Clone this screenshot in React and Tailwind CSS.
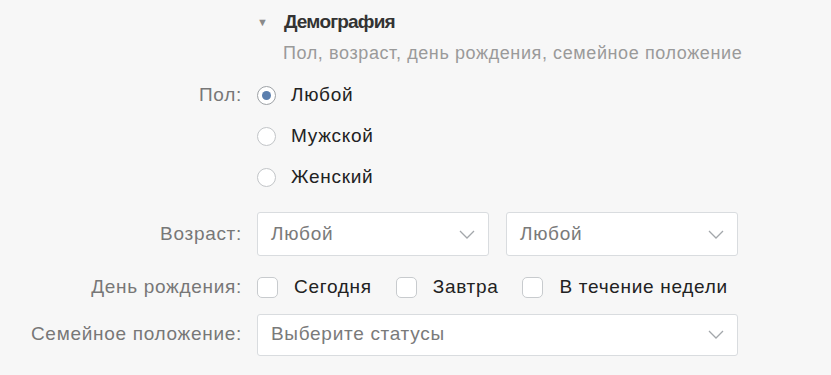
const font = { fontFamily: '"Liberation Sans", Arial, sans-serif' };

const Chevron = () => (
  <svg width="16" height="9" viewBox="0 0 16 9" fill="none">
    <polyline points="1,1 8,8 15,1" stroke="#a3a7ab" strokeWidth="1.3" />
  </svg>
);

const Select = ({ value, className }) => (
  <div className={`flex items-center justify-between rounded-[3px] border border-[#d9dcdf] bg-white pl-[13px] pr-[13px] ${className}`}>
    <span className="text-[19px] tracking-[0.7px] text-[#7a7a7a]">{value}</span>
    <Chevron />
  </div>
);

const Radio = ({ checked, label }) => (
  <label className="flex h-[41px] items-center gap-[15px]">
    <span className={`flex h-[19px] w-[19px] items-center justify-center rounded-full border bg-white ${checked ? "border-[#9ea2a6]" : "border-[#c2c5c8]"}`}>
      {checked && <span className="h-[9px] w-[9px] rounded-full bg-[#5b7fae]" />}
    </span>
    <span className="text-[19px] tracking-[0.7px] text-[#222]">{label}</span>
  </label>
);

const Check = ({ label }) => (
  <label className="flex items-center gap-[16px]">
    <span className="h-[21px] w-[21px] rounded-[5px] border border-[#c8cbce] bg-white" />
    <span className="text-[19px] tracking-[0.7px] text-[#222]">{label}</span>
  </label>
);

export default function App() {
  return (
    <div style={font} className="h-[375px] w-[831px] bg-[#f7f7f7] pt-[10px]">
      <div className="ml-[257px]">
        <div className="flex h-[24px] items-center gap-[16px]">
          <span className="text-[11px] text-[#8a8a8a]">▼</span>
          <span className="text-[19px] font-bold tracking-[-0.8px] text-[#333]">Демография</span>
        </div>
        <div className="ml-[26px] mt-[8px] text-[18px] leading-[22px] tracking-[0.6px] text-[#9a9a9a]">
          Пол, возраст, день рождения, семейное положение
        </div>
      </div>

      <div className="mt-[11px] grid grid-cols-[242px_1fr] items-center gap-x-[15px] text-[19px] tracking-[0.7px]">
        <div className="self-start flex h-[41px] items-center justify-end text-[#777]">Пол:</div>
        <div className="flex flex-col">
          <Radio checked label="Любой" />
          <Radio label="Мужской" />
          <Radio label="Женский" />
        </div>

        <div className="mt-[14px] text-right text-[#777]">Возраст:</div>
        <div className="mt-[14px] flex gap-[17px]">
          <Select value="Любой" className="h-[44px] w-[232px]" />
          <Select value="Любой" className="h-[44px] w-[232px]" />
        </div>

        <div className="mt-[17px] text-right text-[#777]">День рождения:</div>
        <div className="mt-[17px] flex items-center gap-[24px]">
          <Check label="Сегодня" />
          <Check label="Завтра" />
          <Check label="В течение недели" />
        </div>

        <div className="mt-[12px] text-right text-[#777]">Семейное положение:</div>
        <div className="mt-[12px]">
          <Select value="Выберите статусы" className="h-[42px] w-[481px]" />
        </div>
      </div>
    </div>
  );
}
